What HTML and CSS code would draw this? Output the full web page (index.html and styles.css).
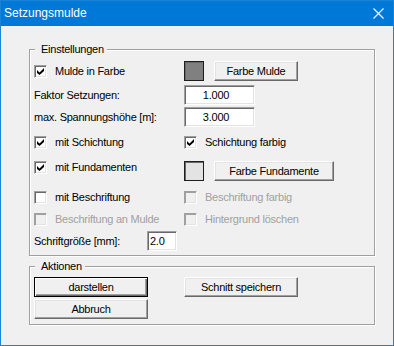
FILE: index.html
```html
<!DOCTYPE html>
<html lang="de">
<head>
    <meta charset="UTF-8">
    <meta name="viewport" content="width=device-width, initial-scale=1.0">
    <title>Setzungsmulde</title>
    <link rel="stylesheet" href="styles.css">
</head>
<body>
    <div class="window">
        <div class="titlebar">
            <span class="title">Setzungsmulde</span>
            <svg class="close" width="11" height="11" viewBox="0 0 11 11">
                <path d="M0.5 0.5 L10.5 10.5 M10.5 0.5 L0.5 10.5" stroke="#fff" stroke-width="1.1" fill="none"/>
            </svg>
        </div>

        <div class="client">
            <!-- Einstellungen -->
            <div class="group settings">
                <span class="legend">Einstellungen</span>

                <div class="row">
                    <div class="col left">
                        <span class="check on"><svg width="11" height="11" viewBox="0 0 11 11"><polygon points="2,4 4.5,6.5 9,2 9,5 4.5,9 2,7"/></svg></span>
                        <span>Mulde in Farbe</span>
                    </div>
                    <div class="col">
                        <span class="swatch dark"></span>
                        <span class="btn btn-mulde">Farbe Mulde</span>
                    </div>
                </div>

                <div class="row extra-2">
                    <div class="col left">Faktor Setzungen:</div>
                    <div class="col"><span class="edit num">1.000</span></div>
                </div>

                <div class="row">
                    <div class="col left">max. Spannungshöhe [m]:</div>
                    <div class="col"><span class="edit num">3.000</span></div>
                </div>

                <div class="row extra-3">
                    <div class="col left">
                        <span class="check on"><svg width="11" height="11" viewBox="0 0 11 11"><polygon points="2,4 4.5,6.5 9,2 9,5 4.5,9 2,7"/></svg></span>
                        <span>mit Schichtung</span>
                    </div>
                    <div class="col">
                        <span class="check on"><svg width="11" height="11" viewBox="0 0 11 11"><polygon points="2,4 4.5,6.5 9,2 9,5 4.5,9 2,7"/></svg></span>
                        <span>Schichtung farbig</span>
                    </div>
                </div>

                <div class="row extra-7">
                    <div class="col left top">
                        <span class="check on"><svg width="11" height="11" viewBox="0 0 11 11"><polygon points="2,4 4.5,6.5 9,2 9,5 4.5,9 2,7"/></svg></span>
                        <span>mit Fundamenten</span>
                    </div>
                    <div class="col">
                        <span class="swatch light"></span>
                        <span class="btn btn-fund">Farbe Fundamente</span>
                    </div>
                </div>

                <div class="row extra-4">
                    <div class="col left">
                        <span class="check"></span>
                        <span>mit Beschriftung</span>
                    </div>
                    <div class="col disabled">
                        <span class="check"></span>
                        <span>Beschriftung farbig</span>
                    </div>
                </div>

                <div class="row">
                    <div class="col left disabled">
                        <span class="check"></span>
                        <span>Beschriftung an Mulde</span>
                    </div>
                    <div class="col disabled">
                        <span class="check"></span>
                        <span>Hintergrund löschen</span>
                    </div>
                </div>

                <div class="row">
                    <div class="col label-size">Schriftgröße [mm]:</div>
                    <span class="edit small">2.0</span>
                </div>
            </div>

            <!-- Aktionen -->
            <div class="group actions">
                <span class="legend">Aktionen</span>
                <div class="action-grid">
                    <span class="btn default">darstellen</span>
                    <span class="btn">Schnitt speichern</span>
                    <span class="btn">Abbruch</span>
                </div>
            </div>
        </div>
    </div>
</body>
</html>
```

FILE: styles.css
```css
* {
    margin: 0;
    padding: 0;
    box-sizing: border-box;
}

body {
    font-family: 'Liberation Sans', Arial, sans-serif;
    font-size: 11px;
    letter-spacing: -0.25px;
    line-height: 13px;
    color: #000;
    background: #fff;
}

.window {
    width: 394px;
    height: 346px;
    border: 1px solid #1883d7;
    background: #f0f0f0;
    display: flex;
    flex-direction: column;
}

.titlebar {
    height: 25px;
    background: #0078d7;
    color: #fff;
    display: flex;
    align-items: center;
    justify-content: space-between;
    padding: 0 9px 0 3px;
}

.title {
    font-size: 12px;
    letter-spacing: 0;
}

.close {
    display: block;
}

.client {
    padding: 23px 0 0 28px;
}

/* group boxes */
.group {
    position: relative;
    width: 346px;
    border: 1px solid #a0a0a0;
    box-shadow: 1px 1px 0 #fff, inset 1px 1px 0 #fff;
}

.legend {
    position: absolute;
    top: -7px;
    left: 5px;
    padding: 0 3px 0 6px;
    background: #f0f0f0;
}

.settings {
    display: flex;
    flex-direction: column;
    gap: 2px;
    padding: 11px 0 4px 4px;
}

.actions {
    margin-top: 10px;
    padding: 10px 0 5px 4px;
}

/* rows */
.row {
    display: flex;
    align-items: center;
    height: 20px;
}

.extra-2 { margin-top: 2px; }
.extra-3 { margin-top: 3px; }
.extra-4 { margin-top: 4px; }
.extra-7 { margin-top: 7px; }

.col {
    display: flex;
    align-items: center;
    gap: 8px;
    white-space: nowrap;
}

.col.left {
    width: 150px;
}

.col.top {
    align-self: flex-start;
}

.label-size {
    width: 113px;
}

.disabled {
    color: #a0a0a0;
}

/* controls */
.check {
    width: 13px;
    height: 13px;
    flex: none;
    background: #fff;
    border: 1px solid;
    border-color: #a0a0a0 #fff #fff #a0a0a0;
    box-shadow: inset 1px 1px 0 #696969, inset -1px -1px 0 #e3e3e3;
}

.check svg {
    display: block;
}

.disabled .check {
    background: #f0f0f0;
    box-shadow: inset 1px 1px 0 #a0a0a0, inset -1px -1px 0 #e3e3e3;
}

.edit {
    height: 20px;
    background: #fff;
    border: 1px solid;
    border-color: #a0a0a0 #fff #fff #a0a0a0;
    box-shadow: inset 1px 1px 0 #696969, inset -1px -1px 0 #e3e3e3;
    display: flex;
    align-items: center;
}

.edit.num {
    width: 71px;
    justify-content: center;
    padding-right: 7px;
}

.edit.small {
    width: 30px;
    padding-left: 2px;
}

.swatch {
    width: 20px;
    height: 20px;
    flex: none;
    border: 1px solid #1e1e1e;
    box-shadow: inset 1px 1px 0 #696969;
    margin-right: 2px;
}

.swatch.dark {
    background: #808080;
}

.swatch.light {
    background: #e3e3e3;
}

.btn {
    display: flex;
    align-items: center;
    justify-content: center;
    width: 114px;
    height: 20px;
    background: #f0f0f0;
    border: 1px solid;
    border-color: #fff #696969 #696969 #fff;
    box-shadow: inset -1px -1px 0 #a0a0a0, inset 1px 1px 0 #e3e3e3;
    white-space: nowrap;
}

.btn-mulde {
    width: 84px;
}

.btn-fund {
    width: 120px;
}

.btn.default {
    border: 1px solid #000;
    box-shadow: inset 1px 1px 0 #fff, inset -1px -1px 0 #696969, inset -2px -2px 0 #a0a0a0;
}

.action-grid {
    display: grid;
    grid-template-columns: 150px 114px;
    row-gap: 2px;
}
```
